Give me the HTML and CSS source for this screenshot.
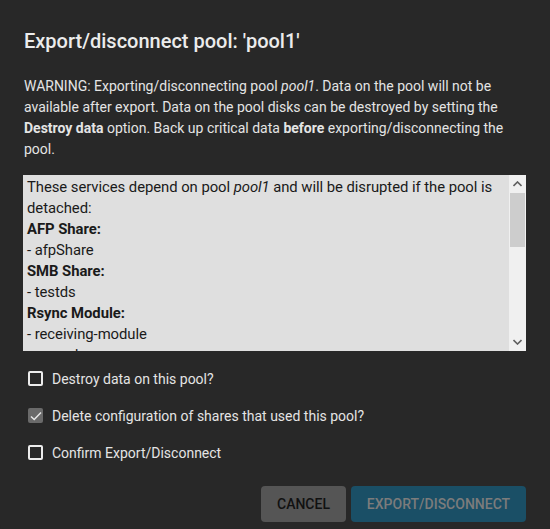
FILE: index.html
```html
<!DOCTYPE html>
<html>
<head>
<meta charset="utf-8">
<link rel="stylesheet" href="styles.css">
</head>
<body>
<div class="dialog">
  <h1 class="title">Export/disconnect pool: 'pool1'</h1>
  <p class="warning">WARNING: Exporting/disconnecting pool <i>pool1</i>. Data on the pool will not be available after export. Data on the pool disks can be destroyed by setting the <b>Destroy data</b> option. Back up critical data <b>before</b> exporting/disconnecting the pool.</p>
  <div class="services">
    <div class="services-text">
      <div>These services depend on pool <i>pool1</i> and will be disrupted if the pool is detached:</div>
      <div><b>AFP Share:</b></div>
      <div>- afpShare</div>
      <div><b>SMB Share:</b></div>
      <div>- testds</div>
      <div><b>Rsync Module:</b></div>
      <div>- receiving-module</div>
      <div>- rsyncd</div>
    </div>
    <div class="scrollbar">
      <div class="sb-arrow">
        <svg width="9" height="6" viewBox="0 0 9 6"><path d="M0.5 5 L4.5 1 L8.5 5" fill="none" stroke="#5f5f5f" stroke-width="1.6"/></svg>
      </div>
      <div class="sb-thumb"></div>
      <div class="sb-track"></div>
      <div class="sb-arrow">
        <svg width="9" height="6" viewBox="0 0 9 6"><path d="M0.5 1 L4.5 5 L8.5 1" fill="none" stroke="#5f5f5f" stroke-width="1.6"/></svg>
      </div>
    </div>
  </div>
  <div class="options">
    <label class="option"><span class="box"></span><span>Destroy data on this pool?</span></label>
    <label class="option"><span class="box checked"><svg width="12" height="10" viewBox="0 0 12 10"><path d="M1 5.5 L4.2 8.5 L11 1.5" fill="none" stroke="#e8e8e8" stroke-width="1.5"/></svg></span><span>Delete configuration of shares that used this pool?</span></label>
    <label class="option"><span class="box"></span><span>Confirm Export/Disconnect</span></label>
  </div>
  <div class="actions">
    <button class="btn btn-cancel">CANCEL</button>
    <button class="btn btn-export">EXPORT/DISCONNECT</button>
  </div>
</div>
</body>
</html>
```
FILE: styles.css
```css
html, body {
  margin: 0;
  padding: 0;
  background: #282828;
}
body {
  font-family: Roboto, "Liberation Sans", sans-serif;
  color: #e6e6e6;
  width: 550px;
  height: 529px;
  overflow: hidden;
}
.dialog {
  box-sizing: border-box;
  width: 550px;
  height: 529px;
  padding: 25px 24px 0 24px;
  background: #282828;
  border-radius: 0 0 4px 4px;
}
.title {
  margin: 0;
  font-size: 20px;
  font-weight: 500;
  line-height: 32px;
  color: #ececec;
}
.warning {
  margin: 19px 0 0 0;
  font-size: 14px;
  line-height: 21px;
  color: #e4e4e4;
}
.services {
  margin: 15px 0 0 -1px;
  width: 503px;
  height: 176px;
  display: flex;
  background: #dfdfdf;
}
.services-text {
  flex: 1;
  overflow: hidden;
  padding: 2px 0 0 4px;
  font-size: 14.85px;
  line-height: 21px;
  letter-spacing: -0.05px;
  color: #1a1a1a;
}
.services-text b {
  font-weight: 700;
}
.scrollbar {
  width: 17px;
  display: flex;
  flex-direction: column;
  background: #f0f0f0;
}
.sb-arrow {
  height: 18px;
  display: flex;
  align-items: center;
  justify-content: center;
}
.sb-thumb {
  height: 54px;
  margin: 0 1px;
  background: #cdcdcd;
}
.sb-track {
  flex: 1;
}
.options {
  margin-top: 9px;
  display: flex;
  flex-direction: column;
}
.option {
  height: 37px;
  display: flex;
  align-items: center;
  gap: 9px;
  padding-left: 4px;
  font-size: 14px;
  color: #e4e4e4;
}
.box {
  box-sizing: border-box;
  width: 15px;
  height: 15px;
  border: 2px solid #ececec;
  border-radius: 2px;
  display: flex;
  align-items: center;
  justify-content: center;
}
.box.checked {
  border: none;
  background: #6a6a6a;
}
.actions {
  margin-top: 15px;
  display: flex;
  justify-content: flex-end;
  gap: 5px;
}
.btn {
  height: 36px;
  border: none;
  border-radius: 4px;
  font-family: Roboto, "Liberation Sans", sans-serif;
  font-size: 14px;
  font-weight: 500;
  padding: 0;
}
.btn-cancel {
  width: 85px;
  background: #555555;
  color: #111111;
}
.btn-export {
  width: 175px;
  background: #1a4f66;
  color: #7c7c7c;
}
```
